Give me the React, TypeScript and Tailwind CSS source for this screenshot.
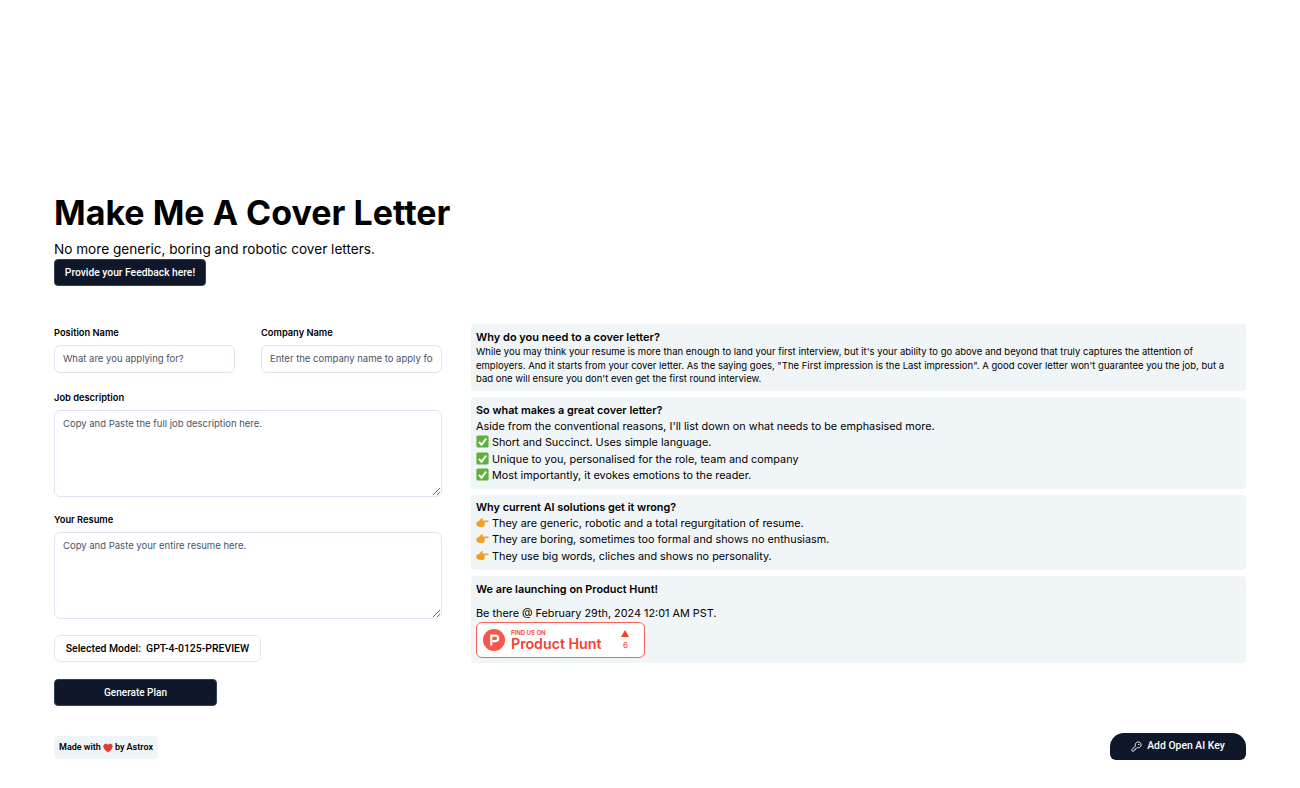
import { KeyRound } from "lucide-react";

function CheckEmoji() {
  return (
    <svg viewBox="0 0 16 16" className="mr-[3px] inline-block h-[13px] w-[13px] align-[-2px]">
      <rect x="0.5" y="0.5" width="15" height="15" rx="2" fill="#5fb03c" />
      <path d="M3.500 8.500 6.800 12 12.500 4.500" fill="none" stroke="#fff" strokeWidth="2.400" />
    </svg>
  );
}

function PointEmoji() {
  return (
    <svg viewBox="0 0 16 16" className="mr-[3px] inline-block h-[13px] w-[13px] align-[-2px]">
      <path
        d="M.5 7.500 3.500 6l3-3c.8-.8 2.200-.3 1.800.8L7.800 5.500l7 .1c1.100.1 1.100 1.800 0 1.900l-4.300.2.200 3.500c-.1 1.300-1 2.300-2.400 2.300H5.500C3.500 13.500 2.300 12.200.5 12z"
        fill="#f0a029"
      />
    </svg>
  );
}

function Field({ label, placeholder }: { label: string; placeholder: string }) {
  return (
    <div className="pt-[2px]">
      <label className="mb-[5px] block text-[9.300px] leading-[13px] font-semibold text-black">{label}</label>
      <input
        placeholder={placeholder}
        className="h-[28px] w-full rounded-md border border-[#dfe5f2] bg-white px-2 text-[9.500px] outline-none placeholder:text-[#475569]"
      />
    </div>
  );
}

function TextArea({ label, placeholder }: { label: string; placeholder: string }) {
  return (
    <div>
      <label className="mb-[6px] block text-[9.300px] leading-[13px] font-semibold text-black">{label}</label>
      <textarea
        placeholder={placeholder}
        className="block h-[87px] w-full rounded-md border border-[#dfe5f2] bg-white px-2 py-[6px] text-[9.500px] leading-[14px] outline-none placeholder:text-[#475569]"
      />
    </div>
  );
}

const wrong = [
  "They are generic, robotic and a total regurgitation of resume.",
  "They are boring, sometimes too formal and shows no enthusiasm.",
  "They use big words, cliches and shows no personality.",
];

const great = [
  "Short and Succinct. Uses simple language.",
  "Unique to you, personalised for the role, team and company",
  "Most importantly, it evokes emotions to the reader.",
];

export default function App() {
  return (
    <div className="h-[788px] overflow-hidden bg-white pt-[193px] pl-[54px] pr-[54px] font-['Inter',sans-serif] text-black">
      <h1 className="text-[34px] leading-[40px] font-bold">Make Me A Cover Letter</h1>
      <p className="mt-[6px] text-[13.600px] leading-[20px]">No more generic, boring and robotic cover letters.</p>
      <button className="block h-[27px] w-[152px] rounded border border-[#334155] bg-[#0f172a] font-['Roboto',sans-serif] text-[10.300px] font-medium text-white">
        Provide your Feedback here!
      </button>

      <div className="mt-[38px] flex gap-[29px]">
        <div className="flex w-[388px] shrink-0 flex-col">
          <div className="grid grid-cols-2 gap-[26px]">
            <Field label="Position Name" placeholder="What are you applying for?" />
            <Field label="Company Name" placeholder="Enter the company name to apply for" />
          </div>
          <div className="mt-[18px] flex flex-col gap-[16px]">
            <TextArea label="Job description" placeholder="Copy and Paste the full job description here." />
            <TextArea label="Your Resume" placeholder="Copy and Paste your entire resume here." />
          </div>
          <div className="mt-[16px] flex h-[27px] w-[207px] items-center justify-center rounded-md border border-[#e2e8f0] pt-px font-['Roboto',sans-serif] text-[10.450px] font-medium whitespace-pre">
            Selected Model:{"  "}GPT-4-0125-PREVIEW
          </div>
          <button className="mt-[17px] h-[27px] w-[163px] rounded border border-[#334155] bg-[#0f172a] font-['Roboto',sans-serif] text-[10px] font-medium text-white">
            Generate Plan
          </button>
        </div>

        <div className="flex min-w-0 flex-1 flex-col gap-[6px]">
          <section className="rounded bg-[#f0f5f8] px-[5px] pt-[6px] pb-[5px] text-[9.500px] leading-[13.500px]">
            <h2 className="text-[11px] leading-[15px] font-semibold">Why do you need to a cover letter?</h2>
            <p>
              While you may think your resume is more than enough to land your first interview, but it's your ability to go
              above and beyond that truly captures the attention of employers. And it starts from your cover letter. As the
              saying goes, "The First impression is the Last impression". A good cover letter won't guarantee you the job, but
              a bad one will ensure you don't even get the first round interview.
            </p>
          </section>
          <section className="h-[92px] rounded bg-[#f0f5f8] px-[5px] pt-[5px] text-[10.850px] leading-[16.400px]">
            <h2 className="font-semibold">So what makes a great cover letter?</h2>
            <p>Aside from the conventional reasons, I'll list down on what needs to be emphasised more.</p>
            {great.map((t) => (
              <p key={t}>
                <CheckEmoji />
                {t}
              </p>
            ))}
          </section>
          <section className="h-[75px] rounded bg-[#f0f5f8] px-[5px] pt-[4px] text-[10.850px] leading-[16.400px]">
            <h2 className="font-semibold">Why current AI solutions get it wrong?</h2>
            {wrong.map((t) => (
              <p key={t}>
                <PointEmoji />
                {t}
              </p>
            ))}
          </section>
          <section className="h-[87px] rounded bg-[#f0f5f8] px-[5px] pt-[5px] text-[10.850px] leading-[16px]">
            <h2 className="font-semibold">We are launching on Product Hunt!</h2>
            <p className="mt-[8px]">Be there @ February 29th, 2024 12:01 AM PST.</p>
            <div className="mt-[1px] flex h-[36px] w-[169px] items-center rounded-md border border-[#ff6154] bg-white pl-[6px]">
              <svg viewBox="0 0 40 40" className="h-[22px] w-[22px] shrink-0">
                <circle cx="20" cy="20" r="20" fill="#f5574b" />
                <path d="M22.700 20H17v-6h5.700a3 3 0 0 1 0 6zm0-10H13v20h4v-6h5.700a7 7 0 0 0 0-14z" fill="#fff" />
              </svg>
              <div className="ml-[6px] flex flex-col">
                <span className="text-[6px] leading-[7px] font-semibold text-[#f93d2f]">FIND US ON</span>
                <span className="text-[14.200px] leading-[15px] font-semibold text-[#f93d2f]">Product Hunt</span>
              </div>
              <div className="ml-[20px] flex flex-col items-center">
                <svg viewBox="0 0 8 7" className="h-[7px] w-[8px]">
                  <path d="M4 0 8 7H0z" fill="#f93d2f" />
                </svg>
                <span className="mt-[3px] text-[8px] leading-[10px] text-[#f93d2f]">6</span>
              </div>
            </div>
          </section>
        </div>
      </div>

      <div className="mt-[30px] flex items-start justify-between">
        <div className="flex h-[23px] items-center rounded bg-[#f0f5f8] px-[5px] pt-px font-['Roboto',sans-serif] text-[9px] font-semibold">
          Made with
          <svg viewBox="0 0 16 16" className="mx-[2px] h-[10px] w-[10px]">
            <path d="M8 15C3 11 .5 8.500.5 5.200.500 2.800 2.300 1 4.500 1 6 1 7.300 1.800 8 3c.7-1.200 2-2 3.500-2 2.200 0 4 1.800 4 4.200C15.500 8.500 13 11 8 15z" fill="#e53935" />
          </svg>
          by Astrox
        </div>
        <button className="-mt-[3px] flex h-[27px] w-[136px] items-center justify-center gap-[5px] rounded-t-[14px] rounded-b-[6px] bg-[#0f172a] font-['Roboto',sans-serif] text-[10.400px] font-medium text-white">
          <KeyRound className="h-[11px] w-[11px]" />
          Add Open AI Key
        </button>
      </div>
    </div>
  );
}
